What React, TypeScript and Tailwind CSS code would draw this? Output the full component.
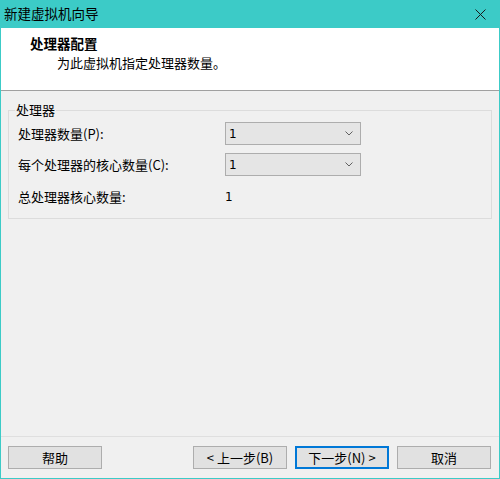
const font = "font-['Noto_Sans_CJK_SC','Noto_Sans',sans-serif]";

function Combo({ value }: { value: string }) {
  return (
    <div className="flex h-[23px] w-[136px] items-center justify-between border border-[#adadad] bg-[#e5e5e5] pl-[3px] pr-[7px]">
      <span className="font-['DejaVu_Sans',sans-serif] text-[12px] text-black">{value}</span>
      <svg width="8" height="5" viewBox="0 0 8 5" className="text-[#606060]">
        <path d="M0.5 0.5 L4 4 L7.5 0.5" fill="none" stroke="currentColor" strokeWidth="1" />
      </svg>
    </div>
  );
}

function Button({ label, primary }: { label: string; primary?: boolean }) {
  return (
    <button
      className={`flex h-[23px] w-[94px] items-center justify-center bg-[#e1e1e1] text-[13px] text-black ${
        primary ? "border border-[#0078d7] shadow-[inset_0_0_0_1px_#0078d7]" : "border border-[#adadad]"
      }`}
    >
      {label}
    </button>
  );
}

export default function App() {
  return (
    <div className={`flex h-[479px] w-[500px] flex-col bg-[#3ccbc7] px-px pb-px ${font}`}>
      {/* Title bar */}
      <div className="flex h-[28px] shrink-0 items-center justify-between pl-[3px] pr-[13px]">
        <span className="text-[13.5px] leading-none text-black">新建虚拟机向导</span>
        <svg width="11" height="11" viewBox="0 0 11 11">
          <path d="M0.5 0.5 L10.5 10.5 M10.5 0.5 L0.5 10.5" stroke="#1a1a1a" strokeWidth="1" />
        </svg>
      </div>

      {/* Header */}
      <div className="h-[63px] shrink-0 border-b border-[#a0a0a0] bg-white pl-[29px] pt-[5px]">
        <div className="text-[13.5px] font-bold leading-[20px] text-black">处理器配置</div>
        <div className="pl-[27px] text-[13px] leading-[20px] text-black">为此虚拟机指定处理器数量。</div>
      </div>

      {/* Body */}
      <div className="flex-1 bg-[#f0f0f0] px-[7px] pt-[11px]">
        <fieldset className="h-[117px] border border-[#dcdcdc] pl-[9px] pr-[9px]">
          <legend className="ml-[-3px] px-[1px] text-[13px] leading-[16px] text-black">处理器</legend>
          <div className="mt-[4px] grid grid-cols-[207px_136px] items-center gap-y-[8px] text-[13px] text-black">
            <span>处理器数量(P):</span>
            <Combo value="1" />
            <span>每个处理器的核心数量(C):</span>
            <Combo value="1" />
            <span className="mt-[3px]">总处理器核心数量:</span>
            <span className="mt-[3px] font-['DejaVu_Sans',sans-serif] text-[12px]">1</span>
          </div>
        </fieldset>
      </div>

      {/* Footer */}
      <div className="flex h-[42px] shrink-0 items-start justify-between border-t border-[#dfdfdf] bg-[#f0f0f0] pl-[7px] pr-[8px] pt-[9px]">
        <Button label="帮助" />
        <div className="flex gap-[8px]">
          <Button label="< 上一步(B)" />
          <Button label="下一步(N) >" primary />
          <Button label="取消" />
        </div>
      </div>
    </div>
  );
}
